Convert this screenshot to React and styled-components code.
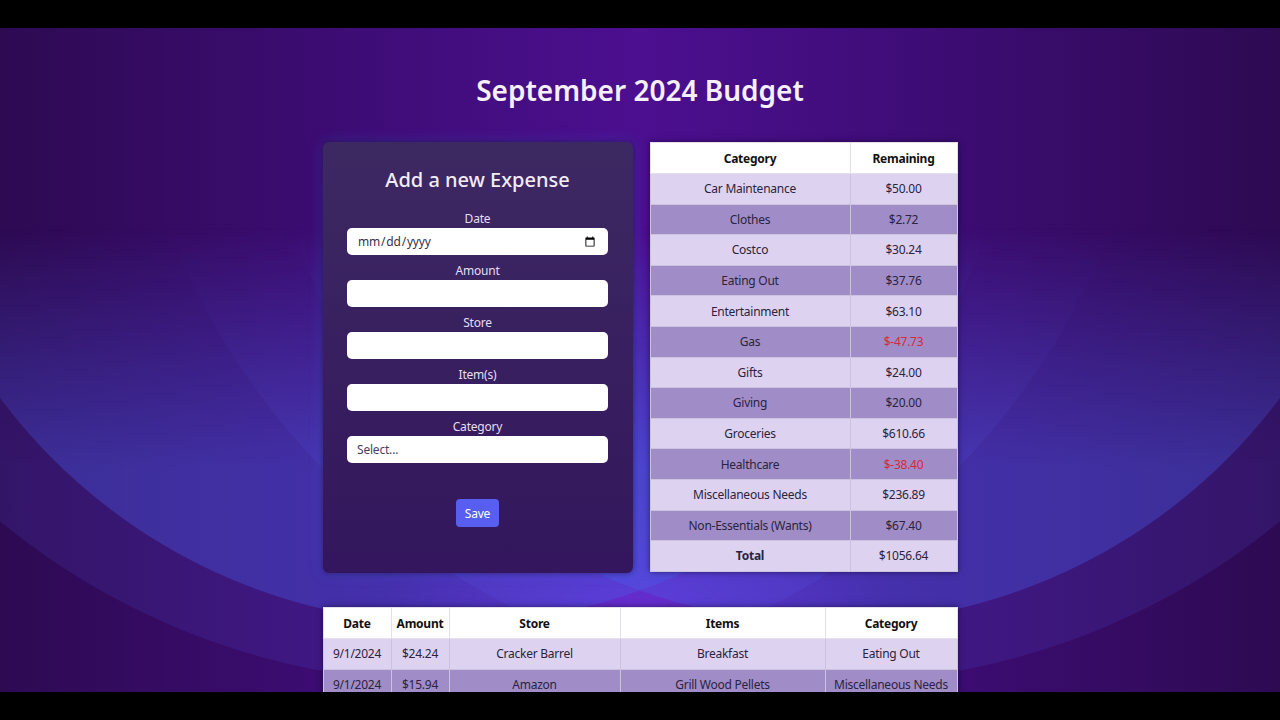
import React from "react";
import styled, { createGlobalStyle } from "styled-components";

const GlobalStyle = createGlobalStyle`
  html, body {
    margin: 0;
    padding: 0;
    background: #000;
  }

  body {
    font-family: "Noto Sans", "Open Sans", sans-serif;
  }

  * {
    box-sizing: border-box;
  }
`;

const Screen = styled.div`
  position: relative;
  isolation: isolate;
  margin-top: 28px;
  height: 664px;
  overflow: hidden;
  display: flex;
  flex-direction: column;
  align-items: center;
  background:
    radial-gradient(ellipse 260px 120px at 640px 580px, rgba(112, 30, 205, 0.85), rgba(112, 30, 205, 0) 100%),
    linear-gradient(90deg, #2d0a52 0%, #3c0c72 25%, #4c0f90 50%, #3c0c72 75%, #2d0a52 100%);

  /* the soft blue circles behind the panels */
  &::before {
    content: "";
    position: absolute;
    inset: 0;
    z-index: -1;
    background:
      radial-gradient(circle 709px at 830px -54px, rgba(90, 95, 240, 0.14) 708px, transparent 709px),
      radial-gradient(circle 709px at 450px -54px, rgba(90, 95, 240, 0.14) 708px, transparent 709px),
      radial-gradient(circle 562px at 450px 34px, rgba(70, 90, 230, 0.36) 561px, transparent 562px),
      radial-gradient(circle 562px at 830px 34px, rgba(70, 90, 230, 0.36) 561px, transparent 562px);
    -webkit-mask-image: linear-gradient(180deg, transparent 200px, #000 440px);
    mask-image: linear-gradient(180deg, transparent 200px, #000 440px);
  }
`;

const Title = styled.h1`
  margin: 45px 0 0;
  font-size: 28px;
  line-height: 34px;
  font-weight: 600;
  color: #f5f0fc;
`;

const Content = styled.div`
  width: 635px;
  margin-top: 35px;
  display: flex;
  flex-direction: column;
  gap: 34px;
`;

const TopRow = styled.div`
  display: flex;
  gap: 17px;
  align-items: flex-start;
`;

const FormCard = styled.form`
  width: 310px;
  height: 431px;
  padding: 23px 24.5px 0;
  border-radius: 6px;
  background: linear-gradient(180deg, #3d2962 0%, #33165d 100%);
  box-shadow: 0 0 6px rgba(20, 6, 40, 0.55), 0 0 14px rgba(70, 110, 240, 0.35);
  display: flex;
  flex-direction: column;
`;

const FormTitle = styled.h2`
  margin: 0 0 14px;
  font-size: 20px;
  line-height: 30px;
  font-weight: 500;
  text-align: center;
  color: #f2ecf8;
`;

const Field = styled.div`
  display: flex;
  flex-direction: column;
  margin-bottom: 6px;
`;

const Label = styled.label`
  display: block;
  text-align: center;
  font-size: 12px;
  line-height: 19px;
  letter-spacing: -0.2px;
  color: #e6ddf2;
`;

const Input = styled.input`
  width: 100%;
  height: 27px;
  border: none;
  border-radius: 5px;
  background: #fff;
  padding: 0 10px;
  font-family: "Noto Sans", sans-serif;
  font-size: 12px;
  letter-spacing: -0.2px;
  color: #3a3048;
  outline: none;

  &::placeholder {
    color: #4a3f5c;
  }
`;

const SaveButton = styled.button`
  align-self: center;
  margin-top: 30px;
  width: 43px;
  height: 28px;
  border: none;
  border-radius: 4px;
  background: #585ef0;
  color: #fff;
  font-family: "Noto Sans", sans-serif;
  font-size: 12px;
  letter-spacing: -0.2px;
  padding: 0;
`;

const Table = styled.table`
  width: ${(p) => p.$width}px;
  border-collapse: collapse;
  table-layout: fixed;
  box-shadow: 0 0 6px rgba(10, 0, 30, 0.55);
  font-size: 12px;
  letter-spacing: -0.25px;
`;

const HeadCell = styled.th`
  height: 31px;
  padding: 0 4px;
  background: #fff;
  color: #111;
  font-weight: 700;
  border: 1px solid #e4e0ea;
  width: ${(p) => (p.$w ? `${p.$w}px` : "auto")};
`;

const Row = styled.tr`
  background: ${(p) => (p.$dark ? "#a08dc7" : "#ddd3f1")};
`;

const Cell = styled.td`
  height: 30.6px;
  padding: 0 4px;
  text-align: center;
  white-space: nowrap;
  color: ${(p) => (p.$negative ? "#d8283c" : "#2b2340")};
  font-weight: ${(p) => (p.$bold ? 700 : 400)};
  border: 1px solid #cbc2dd;
`;

const budget = [
  ["Car Maintenance", 50.0],
  ["Clothes", 2.72],
  ["Costco", 30.24],
  ["Eating Out", 37.76],
  ["Entertainment", 63.1],
  ["Gas", -47.73],
  ["Gifts", 24.0],
  ["Giving", 20.0],
  ["Groceries", 610.66],
  ["Healthcare", -38.4],
  ["Miscellaneous Needs", 236.89],
  ["Non-Essentials (Wants)", 67.4],
];

const expenses = [
  ["9/1/2024", "$24.24", "Cracker Barrel", "Breakfast", "Eating Out"],
  ["9/1/2024", "$15.94", "Amazon", "Grill Wood Pellets", "Miscellaneous Needs"],
];

const money = (n) => (n < 0 ? `$-${Math.abs(n).toFixed(2)}` : `$${n.toFixed(2)}`);

const fields = ["Amount", "Store", "Item(s)"];

const App = () => {
  return (
    <>
      <GlobalStyle />
      <Screen>
        <Title>September 2024 Budget</Title>
        <Content>
          <TopRow>
            <FormCard onSubmit={(e) => e.preventDefault()}>
              <FormTitle>Add a new Expense</FormTitle>
              <Field>
                <Label>Date</Label>
                <Input type="date" />
              </Field>
              {fields.map((f) => (
                <Field key={f}>
                  <Label>{f}</Label>
                  <Input type="text" />
                </Field>
              ))}
              <Field>
                <Label>Category</Label>
                <Input type="text" placeholder="Select..." readOnly />
              </Field>
              <SaveButton type="submit">Save</SaveButton>
            </FormCard>

            <Table $width={308}>
              <thead>
                <tr>
                  <HeadCell $w={200}>Category</HeadCell>
                  <HeadCell>Remaining</HeadCell>
                </tr>
              </thead>
              <tbody>
                {budget.map(([name, value], i) => (
                  <Row key={name} $dark={i % 2 === 1}>
                    <Cell>{name}</Cell>
                    <Cell $negative={value < 0}>{money(value)}</Cell>
                  </Row>
                ))}
                <Row>
                  <Cell $bold>Total</Cell>
                  <Cell>$1056.64</Cell>
                </Row>
              </tbody>
            </Table>
          </TopRow>

          <Table $width={635}>
            <thead>
              <tr>
                <HeadCell $w={68}>Date</HeadCell>
                <HeadCell $w={58}>Amount</HeadCell>
                <HeadCell $w={171}>Store</HeadCell>
                <HeadCell $w={205}>Items</HeadCell>
                <HeadCell>Category</HeadCell>
              </tr>
            </thead>
            <tbody>
              {expenses.map((row, i) => (
                <Row key={i} $dark={i % 2 === 1}>
                  {row.map((c, j) => (
                    <Cell key={j}>{c}</Cell>
                  ))}
                </Row>
              ))}
            </tbody>
          </Table>
        </Content>
      </Screen>
    </>
  );
};

export default App;
